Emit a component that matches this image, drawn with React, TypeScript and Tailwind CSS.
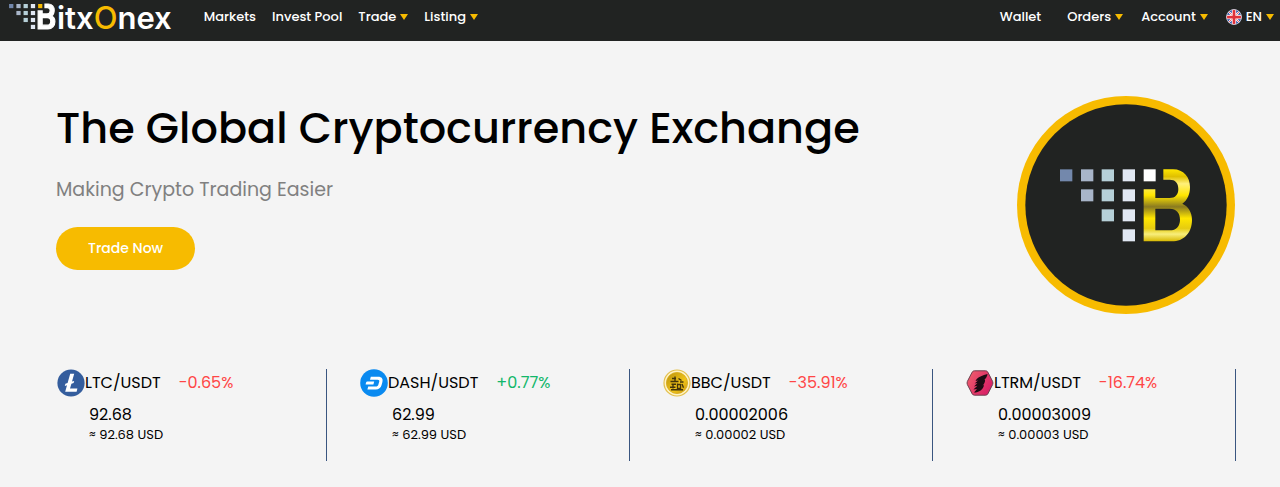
import type { ReactNode } from 'react';
import clsx from 'clsx';

interface Ticker {
  pair: string;
  change: string;
  price: string;
  usd: string;
  icon: ReactNode;
}

const SQUARES = [
  { x: 151, y: 237, fill: '#7388ac' },
  { x: 214, y: 237, fill: '#a8b5c9' },
  { x: 276, y: 237, fill: '#b6d0d8' },
  { x: 339, y: 237, fill: '#e1e8f3' },
  { x: 214, y: 297, fill: '#a8b5c9' },
  { x: 276, y: 297, fill: '#b6d0d8' },
  { x: 339, y: 297, fill: '#e1e8f3' },
  { x: 276, y: 357, fill: '#b6d0d8' },
  { x: 339, y: 357, fill: '#e1e8f3' },
  { x: 339, y: 417, fill: '#e1e8f3' },
];

function Mark({ fill, corner, stroke }: { fill: string; corner: string; stroke?: string }) {
  return (
    <g>
      {SQUARES.map((s) => (
        <rect key={`${s.x}-${s.y}`} x={s.x} y={s.y} width="37" height="36" fill={s.fill} />
      ))}
      <rect x="402" y="237" width="36" height="36" fill={corner} />
      <path
        fill={fill}
        stroke={stroke}
        strokeWidth="10"
        fillRule="evenodd"
        d="M461 237H490C522 237 541 261 541 290C541 312 533 330 518 340C536 348 547 366 547 388C547 428 522 453 487 453H402V297H437V323H480C497 323 506 313 506 296C506 278 497 268 480 268H461ZM437 355V420H480C500 420 511 407 511 388C511 367 500 355 480 355Z"
      />
    </g>
  );
}

function Badge() {
  return (
    <svg viewBox="22 17 654 654" className="size-[218px] shrink-0" aria-hidden="true">
      <defs>
        <linearGradient id="gold" gradientUnits="userSpaceOnUse" x1="0" y1="237" x2="0" y2="453">
          <stop offset="0" stopColor="#ffe600" />
          <stop offset="0.1" stopColor="#e0c000" />
          <stop offset="0.2" stopColor="#fff07a" />
          <stop offset="0.36" stopColor="#ffe600" />
          <stop offset="0.52" stopColor="#8a7a20" />
          <stop offset="0.68" stopColor="#ffe600" />
          <stop offset="0.82" stopColor="#e6cc10" />
          <stop offset="0.9" stopColor="#f8ee7c" />
          <stop offset="1" stopColor="#d8b800" />
        </linearGradient>
      </defs>
      <circle cx="349" cy="344" r="327" fill="#f7bb00" />
      <circle cx="349" cy="344" r="302" fill="#212322" />
      <Mark fill="url(#gold)" corner="#ffffff" />
    </svg>
  );
}

function LtcIcon() {
  return (
    <svg viewBox="0 0 28 28" className="size-7" aria-hidden="true">
      <circle cx="14" cy="14" r="13.6" fill="#345d9d" />
      <path
        fill="#fff"
        d="M13.2 4.8H17.2L15 12.6L17.2 11.9L16.6 14L14.4 14.7L13 19.6H20.4L19.6 22.8H8.2L10 16.2L7.8 16.9L8.4 14.8L10.6 14.1Z"
      />
    </svg>
  );
}

function DashIcon() {
  return (
    <svg viewBox="0 0 28 28" className="size-7" aria-hidden="true">
      <circle cx="14" cy="14" r="13.8" fill="#0a8af0" />
      <path
        fill="#fff"
        d="M10.8 7.8H18.2C21.8 7.8 23.2 10 22.4 13L21.6 16C20.8 19 18.8 20.4 15.8 20.4H7.4L8.2 17.6H15.6C17.2 17.6 18 17 18.4 15.6L19.2 12.8C19.6 11.4 19 10.7 17.6 10.7H10Z"
      />
      <path fill="#fff" d="M7.4 12.6H14.2L13.4 15.4H5.6L6 13.8C6.2 13 6.7 12.6 7.4 12.6Z" />
    </svg>
  );
}

function BbcIcon() {
  return (
    <svg viewBox="0 0 28 28" className="size-7" aria-hidden="true">
      <defs>
        <linearGradient id="coin" x1="0" y1="0" x2="1" y2="1">
          <stop offset="0" stopColor="#b8900c" />
          <stop offset="0.6" stopColor="#f0c418" />
          <stop offset="1" stopColor="#c79412" />
        </linearGradient>
      </defs>
      <circle cx="14" cy="14" r="13" fill="#fff3c4" stroke="#e3c04e" strokeWidth="1.2" />
      <circle cx="14" cy="14" r="10.6" fill="url(#coin)" stroke="#d6a91c" strokeWidth="0.8" />
      <g fill="none" stroke="#41340a" strokeWidth="1.4">
        <path d="M9 9.5H13M12 7.5V12.5M7.5 12.5H15.5M8.5 15.2H13M15.5 9.5L18.5 11.5M17 13H20.5" />
        <path d="M10 15V19.5M7 18.2H12.5M14.5 14.5V19.5H17.5V15.5H14.5M19 15L20.5 18.8M8 20.8H20" />
      </g>
    </svg>
  );
}

function LtrmIcon() {
  return (
    <svg viewBox="0 0 28 28" className="size-7" aria-hidden="true">
      <defs>
        <linearGradient id="ltrm" x1="0" y1="0" x2="1" y2="0.6">
          <stop offset="0" stopColor="#f0626c" />
          <stop offset="1" stopColor="#d81f66" />
        </linearGradient>
      </defs>
      <path
        fill="url(#ltrm)"
        stroke="#6d4050"
        strokeWidth="1"
        strokeLinejoin="round"
        d="M8.5 1.8H19.5Q21 1.8 21.8 3.1L26.6 12.4Q27.3 14 26.6 15.6L21.8 24.9Q21 26.2 19.5 26.2H8.5Q7 26.2 6.2 24.9L1.4 15.6Q.7 14 1.4 12.4L6.2 3.1Q7 1.8 8.5 1.8Z"
      />
      <path
        fill="#1c0b13"
        d="M21.5 5C17 6.5 11.5 7.5 9.5 12L12 11.4L8.6 14.6L11.4 14L8 17.4L11.4 16.8L7.4 20.4L11 20L8 23.6C13 23.4 17.5 20.5 18 16L16.6 16.6C18.5 14.5 19.4 12.5 19 10.4L17.6 11.2C20 9.5 21.2 7.6 21.5 5Z"
      />
    </svg>
  );
}

function FlagIcon() {
  return (
    <svg viewBox="0 0 32 32" className="size-4" aria-hidden="true">
      <clipPath id="flag">
        <circle cx="16" cy="16" r="15" />
      </clipPath>
      <g clipPath="url(#flag)">
        <path fill="#2347a5" d="M0 0H32V32H0Z" />
        <path stroke="#fff" strokeWidth="4" d="M0 0L32 32M32 0L0 32" />
        <path stroke="#e0303a" strokeWidth="1.5" d="M0 0L32 32M32 0L0 32" />
        <path stroke="#fff" strokeWidth="9" d="M16 0V32M0 16H32" />
        <path stroke="#e0303a" strokeWidth="5.5" d="M16 0V32M0 16H32" />
      </g>
      <circle cx="16" cy="16" r="15" fill="none" stroke="#d7dce6" strokeWidth="1.5" />
    </svg>
  );
}

function Caret() {
  return (
    <svg viewBox="0 0 8 6" className="h-1.5 w-2" aria-hidden="true">
      <path d="M0 0H8L4 6Z" fill="#f7bb00" />
    </svg>
  );
}

const tickers: Ticker[] = [
  { pair: 'LTC/USDT', change: '-0.65%', price: '92.68', usd: '≈ 92.68 USD', icon: <LtcIcon /> },
  { pair: 'DASH/USDT', change: '+0.77%', price: '62.99', usd: '≈ 62.99 USD', icon: <DashIcon /> },
  { pair: 'BBC/USDT', change: '-35.91%', price: '0.00002006', usd: '≈ 0.00002 USD', icon: <BbcIcon /> },
  { pair: 'LTRM/USDT', change: '-16.74%', price: '0.00003009', usd: '≈ 0.00003 USD', icon: <LtrmIcon /> },
];

function MenuButton({ children }: { children: ReactNode }) {
  return (
    <button type="button" aria-haspopup="menu" className="flex items-center gap-1">
      {children}
      <Caret />
    </button>
  );
}

function Header() {
  return (
    <header className="flex items-start bg-[#212322] pb-[5px] pl-[9px] pr-1.5 text-[13px] font-medium text-white">
      <a href="#" aria-label="BitxOnex" className="flex h-9 items-start font-[Inter,sans-serif]">
        <svg viewBox="151 237 396 216" className="mt-1 h-[25px] w-[46px] overflow-visible" aria-hidden="true">
          <Mark fill="#ffffff" corner="#f7bb00" stroke="#ffffff" />
        </svg>
        <span className="pl-0.5 text-[31px] font-semibold leading-9">
          itx<span className="font-medium text-[#f7bb00]">O</span>nex
        </span>
      </a>
      <nav className="ml-8 flex h-[33px] items-center gap-4">
        <a href="#">Markets</a>
        <a href="#">Invest Pool</a>
        <MenuButton>Trade</MenuButton>
        <MenuButton>Listing</MenuButton>
      </nav>
      <nav className="ml-auto flex h-[33px] items-center gap-[18px]">
        <a href="#" className="mr-2">Wallet</a>
        <MenuButton>Orders</MenuButton>
        <MenuButton>Account</MenuButton>
        <MenuButton>
          <FlagIcon />
          EN
        </MenuButton>
      </nav>
    </header>
  );
}

function TickerCard({ ticker }: { ticker: Ticker }) {
  const isUp = ticker.change.startsWith('+');

  return (
    <article className="h-[92px] border-r border-[#3a5580] pl-[33px]">
      <div className="flex h-7 items-center text-base">
        {ticker.icon}
        <h2>{ticker.pair}</h2>
        <span className={clsx('ml-[18px]', isUp ? 'text-[#12b76a]' : 'text-[#ff4646]')}>
          {ticker.change}
        </span>
      </div>
      <div className="pl-8">
        <p className="pt-1.5 text-base leading-6">{ticker.price}</p>
        <p className="text-[13px] leading-4">{ticker.usd}</p>
      </div>
    </article>
  );
}

export default function App() {
  return (
    <div className="min-h-screen bg-[#f4f4f4] font-[Poppins,Inter,sans-serif] text-black">
      <Header />
      <main>
        <section className="flex items-start justify-between pl-14 pr-[45px] pt-[55px]">
          <div className="pt-1">
            <h1 className="text-[43px] font-medium leading-[56px]">The Global Cryptocurrency Exchange</h1>
            <p className="mt-5 text-[19px] leading-7 text-[#808080]">Making Crypto Trading Easier</p>
            <button
              type="button"
              className="mt-[23px] h-[43px] rounded-full bg-[#f7bb00] px-8 pb-0.5 text-sm font-medium text-white"
            >
              Trade Now
            </button>
          </div>
          <Badge />
        </section>
        <section className="grid grid-cols-4 pb-6 pl-6 pr-11 pt-[55px]">
          {tickers.map((ticker) => (
            <TickerCard key={ticker.pair} ticker={ticker} />
          ))}
        </section>
      </main>
    </div>
  );
}
